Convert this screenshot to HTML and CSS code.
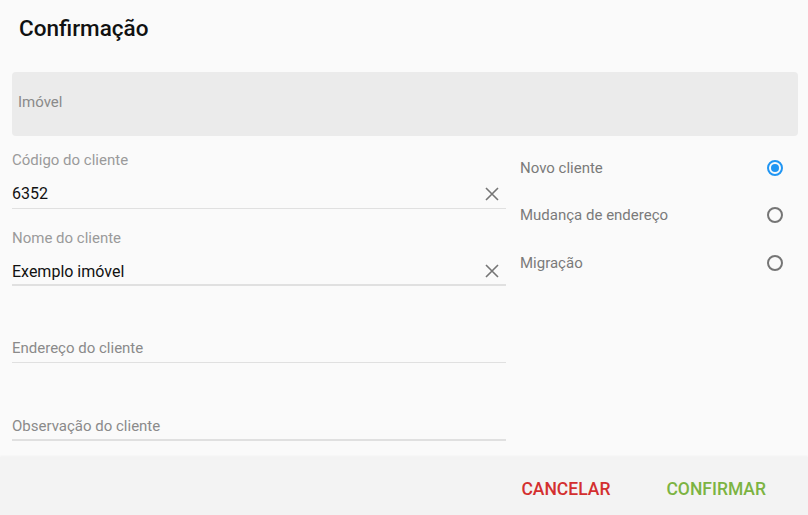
FILE: index.html
```html
<!DOCTYPE html>
<html lang="pt">
<head>
<meta charset="utf-8">
<title>Confirmação</title>
<link rel="stylesheet" href="styles.css">
</head>
<body>
<div class="dialog">
  <h1 class="title">Confirmação</h1>
  <div class="content">
    <div class="select-box"><span class="select-label">Imóvel</span></div>
    <div class="columns">
      <div class="col-left">
        <div class="field">
          <label class="field-label">Código do cliente</label>
          <div class="field-input">
            <span class="value">6352</span>
            <svg class="clear" viewBox="0 0 16 16" width="16" height="16"><path d="M2 2L14 14M14 2L2 14" stroke="#757575" stroke-width="1.6" fill="none"/></svg>
          </div>
        </div>
        <div class="field field-strong">
          <label class="field-label">Nome do cliente</label>
          <div class="field-input">
            <span class="value">Exemplo imóvel</span>
            <svg class="clear" viewBox="0 0 16 16" width="16" height="16"><path d="M2 2L14 14M14 2L2 14" stroke="#757575" stroke-width="1.6" fill="none"/></svg>
          </div>
        </div>
        <div class="field field-empty">
          <div class="field-input"><span class="placeholder">Endereço do cliente</span></div>
        </div>
        <div class="field field-strong field-empty field-last">
          <div class="field-input"><span class="placeholder">Observação do cliente</span></div>
        </div>
      </div>
      <div class="col-right">
        <div class="radio-row"><span class="radio-label">Novo cliente</span><span class="radio checked"></span></div>
        <div class="radio-row"><span class="radio-label">Mudança de endereço</span><span class="radio"></span></div>
        <div class="radio-row"><span class="radio-label">Migração</span><span class="radio"></span></div>
      </div>
    </div>
  </div>
  <div class="footer">
    <button class="btn btn-cancel">CANCELAR</button>
    <button class="btn btn-confirm">CONFIRMAR</button>
  </div>
</div>
</body>
</html>
```

FILE: styles.css
```css
* { box-sizing: border-box; }
html, body { margin: 0; padding: 0; }
body {
  background: #fafafa;
  font-family: Roboto, "Liberation Sans", Arial, sans-serif;
  width: 808px;
  height: 515px;
  overflow: hidden;
}
.dialog {
  display: flex;
  flex-direction: column;
  height: 515px;
}
.title {
  margin: 0;
  padding: 14px 19px 0;
  height: 72px;
  font-size: 22.5px;
  font-weight: 500;
  line-height: 28px;
  color: #111;
}
.content {
  flex: 1;
  padding: 0 10px 0 12px;
}
.select-box {
  height: 64px;
  background: #ebebeb;
  border-radius: 4px;
  display: flex;
  align-items: center;
  padding: 0 6px 4px;
}
.select-label {
  font-size: 15px;
  color: #8a8a8a;
}
.columns {
  display: flex;
  gap: 14px;
}
.col-left {
  width: 494px;
  padding-top: 16px;
  display: flex;
  flex-direction: column;
  gap: 21px;
}
.field {
  display: flex;
  flex-direction: column;
}
.field-label {
  font-size: 15px;
  line-height: 16px;
  color: #9a9a9a;
  margin-bottom: 12px;
}
.field-input {
  height: 29px;
  display: flex;
  align-items: center;
  justify-content: space-between;
  padding-bottom: 1px;
  border-bottom: 1px solid #e0e0e0;
}
.field-strong .field-input {
  height: 28px;
  padding-bottom: 0;
  border-bottom: 2px solid #e0e0e0;
}
.field-empty { margin-top: 27px; }
.field-last { margin-top: 29px; }
.value {
  font-size: 16px;
  color: #111;
}
.placeholder {
  font-size: 15px;
  color: #8a8a8a;
}
.clear {
  margin-right: 6px;
}
.col-right {
  flex: 1;
  padding-top: 8px;
  display: flex;
  flex-direction: column;
}
.radio-row {
  height: 47.5px;
  display: flex;
  align-items: center;
  justify-content: space-between;
  padding-right: 15px;
}
.radio-label {
  font-size: 15px;
  color: #7a7a7a;
}
.radio {
  width: 16px;
  height: 16px;
  border-radius: 50%;
  border: 2px solid #757575;
  position: relative;
}
.radio.checked {
  border-color: #2196f3;
}
.radio.checked::after {
  content: "";
  position: absolute;
  left: 2px;
  top: 2px;
  width: 8px;
  height: 8px;
  border-radius: 50%;
  background: #2196f3;
}
.footer {
  height: 58px;
  background: #f3f3f3;
  box-shadow: 0 -1px 2px rgba(0,0,0,0.04);
  display: flex;
  justify-content: flex-end;
  align-items: center;
  padding-top: 6px;
  padding-right: 34px;
  gap: 40px;
}
.btn {
  background: none;
  border: none;
  padding: 0 8px;
  font-family: Roboto, "Liberation Sans", Arial, sans-serif;
  font-size: 17.5px;
  font-weight: 500;
  cursor: pointer;
}
.btn-cancel { color: #d32f2f; }
.btn-confirm { color: #7cb342; }
```
